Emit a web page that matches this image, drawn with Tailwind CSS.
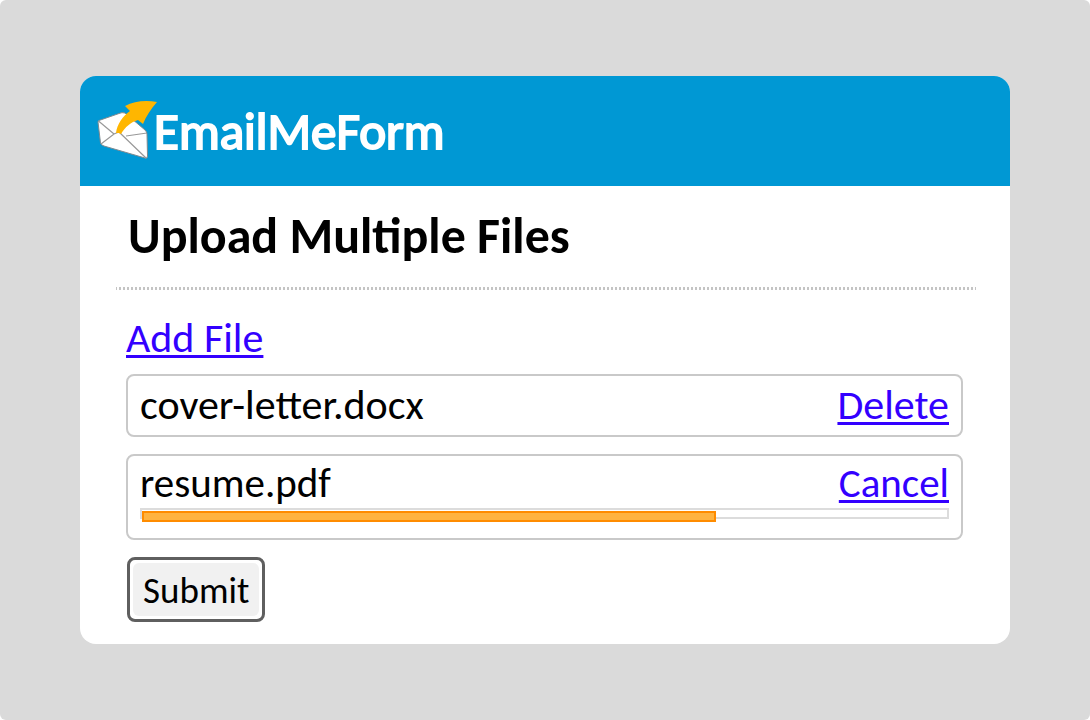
<!DOCTYPE html>
<html lang="en">
<head>
  <meta charset="UTF-8">
  <meta name="viewport" content="width=device-width, initial-scale=1">
  <title>EmailMeForm - Upload Multiple Files</title>
  <script src="https://cdn.jsdelivr.net/npm/@tailwindcss/browser@4"></script>
</head>
<body class="bg-white font-[Carlito,Lato,sans-serif] text-black">
  <div class="min-h-screen rounded-md bg-[#dadada] px-20 py-19">
    <div class="overflow-hidden rounded-2xl bg-white">

      <!-- Header -->
      <header class="flex h-[110px] items-center bg-[#0098d4] px-4">
        <svg class="h-16 w-[62px] shrink-0" viewBox="0 0 62 64" aria-hidden="true">
          <path d="M2 23 Q2 22 3 21.500 L23 14.500 Q26 13 29 14 L49 31 Q51 33 51 35 L51.500 57 Q51.500 60 49 59 L8 47 Q5 46 4.500 44 Z" fill="#fff" stroke="#7f8a8f" stroke-width="1" stroke-linejoin="round"/>
          <path d="M2.500 22 L18 35 M5 45 L18 35 L23 33 M30 37 L51 34 M23 33 L50 59" fill="none" stroke="#999" stroke-width="1.200"/>
          <path d="M20 34 C21 25 27 17 34 12 L29 7 C38 2 50 1 61 3 C55 10 50 17 47 25 L42 21 C35 23 29 28 25 35 L23 34 Z" fill="#ffb600"/>
        </svg>
        <span class="-ml-1 pt-0.5 text-[51px] leading-[60px] text-white [-webkit-text-stroke:2px_white]">EmailMeForm</span>
      </header>

      <!-- Upload form -->
      <form class="px-9 pt-6 pb-[22px]">
        <h1 class="px-3 text-[50px] leading-[52px] font-bold">Upload Multiple Files</h1>
        <div class="mt-[25px] -mr-0.5 h-[3px] bg-[repeating-linear-gradient(90deg,#c4c4c4_0_1px,transparent_1px_3px,#c4c4c4_3px_4px)]"></div>

        <div class="pt-[26px] pr-[11px] pl-2.5">
          <a href="#" class="text-[42px] leading-[44px] text-[#3300ff] underline decoration-3 underline-offset-3">Add File</a>

          <ul class="mt-[14px] space-y-[17px]">
            <li class="flex h-[63px] items-center justify-between rounded-lg border-2 border-[#c9c9c9] px-3 pb-0.5 text-[42px] leading-[44px]">
              <span>cover-letter.docx</span>
              <a href="#" class="text-[#3300ff] underline decoration-3 underline-offset-3">Delete</a>
            </li>
            <li class="rounded-lg border-2 border-[#c9c9c9] px-3 pt-[5px] pb-[19px] text-[41px] leading-[44px]">
              <div class="flex items-center justify-between">
                <span>resume.pdf</span>
                <a href="#" class="text-[#3300ff] underline decoration-3 underline-offset-3">Cancel</a>
              </div>
              <div role="progressbar" aria-label="resume.pdf" aria-valuemin="0" aria-valuemax="100" aria-valuenow="71" class="mt-[3px] h-[11px] border-2 border-[#dcdcdc]">
                <div class="mt-px h-[11px] border-2 border-[#ff8c00] bg-[#ffb340]" style="width: 71.3%"></div>
              </div>
            </li>
          </ul>

          <button type="submit" class="mt-[17px] ml-px rounded-lg border-3 border-[#5f5f5f] p-[3px]">
            <span class="block rounded-md bg-[#f1f1f1] px-2.5 pt-0.5 text-[37px] leading-[51px]">Submit</span>
          </button>
        </div>
      </form>
    </div>
  </div>
</body>
</html>
